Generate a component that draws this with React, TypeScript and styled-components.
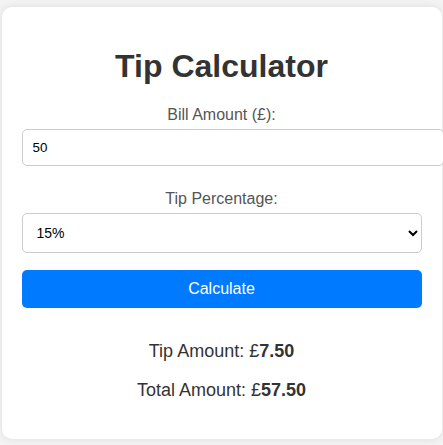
import React from "react";
import styled, { createGlobalStyle } from "styled-components";

const Global = createGlobalStyle`
  html, body { margin: 0; padding: 0; }
  body {
    font-family: "Liberation Sans", Arial, sans-serif;
    background: #f4f4f4;
  }
`;

const Page = styled.div`
  display: flex;
  justify-content: center;
  align-items: center;
  height: 100vh;
`;

const Card = styled.div`
  background: #fff;
  padding: 20px;
  border-radius: 10px;
  box-shadow: 0 0 10px rgba(0, 0, 0, 0.1);
  max-width: 400px;
  width: 100%;
  text-align: center;
`;

const Title = styled.h1`
  margin: 21px 0;
  font-size: 32px;
  font-weight: bold;
  color: #333;
`;

const Label = styled.label`
  display: block;
  margin: 10px 0 5px;
  font-size: 16px;
  color: #555;
`;

const Input = styled.input`
  width: 100%;
  padding: 10px;
  margin-bottom: 24px;
  border: 1px solid #ccc;
  border-radius: 5px;
  font-family: "Liberation Sans", Arial, sans-serif;
  font-size: 13.33px;
  color: #000;
  display: block;
`;

const Select = styled.select`
  width: 100%;
  padding: 10px;
  margin-bottom: 17px;
  border: 1px solid #ccc;
  border-radius: 5px;
  font-family: "Liberation Sans", Arial, sans-serif;
  font-size: 14px;
  color: #000;
  background: #fff;
  display: block;
`;

const Button = styled.button`
  width: 100%;
  padding: 10px;
  background: #007bff;
  color: #fff;
  border: none;
  border-radius: 5px;
  font-family: "Liberation Sans", Arial, sans-serif;
  font-size: 16px;
  display: block;
`;

const Result = styled.div`
  margin-top: 33px;
  font-size: 18px;
  color: #333;
`;

const Line = styled.p`
  margin: 18px 0;
`;

export default function App() {
  return (
    <>
      <Global />
      <Page>
        <Card>
          <Title>Tip Calculator</Title>
          <Label htmlFor="bill">Bill Amount (£):</Label>
          <Input id="bill" type="number" defaultValue="50" />
          <Label htmlFor="tip">Tip Percentage:</Label>
          <Select id="tip" defaultValue="15">
            <option value="10">10%</option>
            <option value="15">15%</option>
            <option value="20">20%</option>
          </Select>
          <Button>Calculate</Button>
          <Result>
            <Line>
              Tip Amount: £<strong>7.50</strong>
            </Line>
            <Line>
              Total Amount: £<strong>57.50</strong>
            </Line>
          </Result>
        </Card>
      </Page>
    </>
  );
}
